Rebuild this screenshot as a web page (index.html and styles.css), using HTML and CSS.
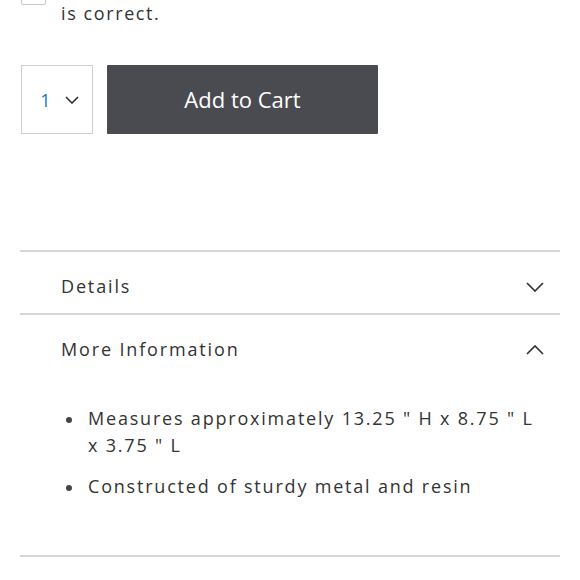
FILE: index.html
```html
<!DOCTYPE html>
<html lang="en">
<head>
<meta charset="utf-8">
<link rel="stylesheet" href="styles.css">
</head>
<body>
<div class="page">
  <div class="confirm">
    <span class="checkbox"></span>
    <span class="confirm-text">is correct.</span>
  </div>

  <div class="buy-row">
    <div class="qty">
      <span class="qty-num">1</span>
      <svg class="qty-chev" width="14" height="8" viewBox="0 0 14 8"><path d="M1 1 L7 7 L13 1" fill="none" stroke="#333" stroke-width="1.6"/></svg>
    </div>
    <button class="add-btn">Add to Cart</button>
  </div>

  <div class="accordion">
    <div class="acc-item">
      <div class="acc-title">
        <span>Details</span>
        <svg class="chev" width="18" height="10" viewBox="0 0 18 10"><path d="M1 1 L9 9 L17 1" fill="none" stroke="#333" stroke-width="1.7"/></svg>
      </div>
    </div>
    <div class="acc-item">
      <div class="acc-title">
        <span>More Information</span>
        <svg class="chev" width="18" height="10" viewBox="0 0 18 10"><path d="M1 9 L9 1 L17 9" fill="none" stroke="#333" stroke-width="1.7"/></svg>
      </div>
      <ul class="acc-content">
        <li>Measures approximately 13.25 " H x 8.75 " L x 3.75 " L</li>
        <li>Constructed of sturdy metal and resin</li>
      </ul>
    </div>
  </div>
</div>
</body>
</html>
```

FILE: styles.css
```css
* { box-sizing: border-box; }
html, body { margin: 0; padding: 0; background: #fff; }
body {
  font-family: "Open Sans", "Liberation Sans", sans-serif;
  color: #333;
}
.page {
  width: 580px;
  padding: 0 20px;
  overflow: hidden;
  height: 580px;
}
.confirm {
  display: flex;
  align-items: flex-start;
  gap: 15px;
  padding-left: 1px;
}
.checkbox {
  flex: none;
  width: 25px;
  height: 25px;
  margin-top: -20px;
  border: 1px solid #c8c8c8;
  border-radius: 2px;
  background: #fff;
}
.confirm-text {
  font-size: 18px;
  line-height: 27px;
  letter-spacing: 1.6px;
}
.buy-row {
  display: flex;
  gap: 14px;
  margin-top: 38px;
  padding-left: 1px;
}
.qty {
  width: 72px;
  height: 69px;
  border: 1px solid #cfcfcf;
  display: flex;
  align-items: center;
  justify-content: center;
  gap: 14px;
}
.qty-num {
  font-size: 18px;
  color: #1979c3;
  margin-left: 5px;
}
.qty-chev { display: block; margin-top: 1px; }
.add-btn {
  width: 271px;
  height: 69px;
  border: none;
  background: #4a4b51;
  color: #fff;
  font-family: "Open Sans", "Liberation Sans", sans-serif;
  font-size: 22px;
  padding: 0 0 2px;
  border-radius: 1px;
}
.accordion {
  margin-top: 116px;
  border-bottom: 2px solid #d6d6d6;
}
.acc-item {
  border-top: 2px solid #d6d6d6;
}
.acc-title {
  display: flex;
  align-items: center;
  justify-content: space-between;
  padding: 21px 16px 13px 41px;
  font-size: 18px;
  line-height: 27px;
  letter-spacing: 1.85px;
}
.chev { display: block; }
.acc-content {
  list-style: none;
  margin: 0;
  padding: 29px 15px 55px 68px;
  font-size: 18px;
  line-height: 27px;
  letter-spacing: 1.8px;
}
.acc-content li {
  position: relative;
  margin-bottom: 14px;
}
.acc-content li:last-child { margin-bottom: 0; }
.acc-content li::before {
  content: "";
  position: absolute;
  left: -22px;
  top: 12px;
  width: 6px;
  height: 6px;
  border-radius: 50%;
  background: #444;
}
```
